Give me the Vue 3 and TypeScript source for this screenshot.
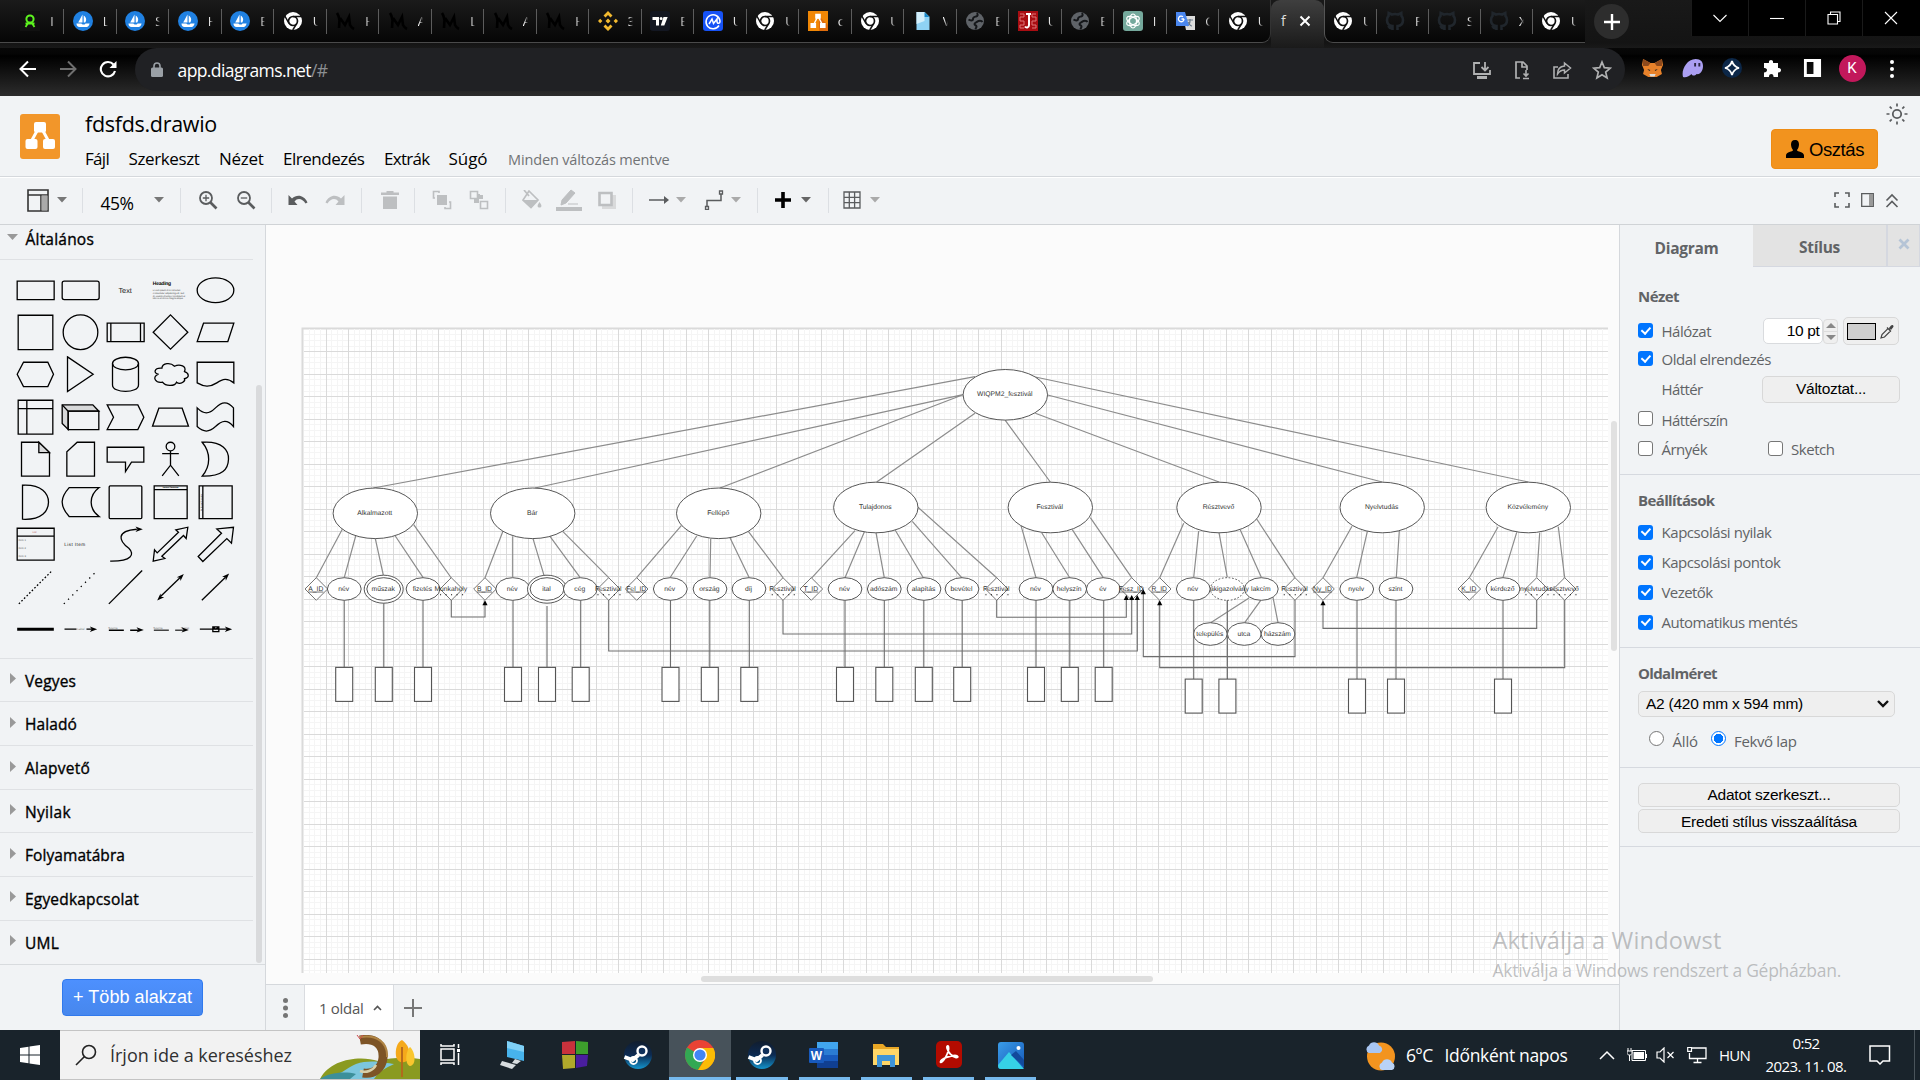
<script setup lang="ts">
interface Placed { x: number; w: number; icon: string; h?: number; gap?: number }

// Keeps a label at its designed width whichever fallback font is installed.
const vFit = {
  mounted(el: HTMLElement, binding: { value: number }) {
    const n = (el.textContent ?? '').length
    const w = el.getBoundingClientRect().width
    if (n > 0 && w > 0) el.style.letterSpacing = `${(binding.value - w) / n}px`
  },
}

// Turns icon positions along a bar into the gaps between neighbours.
function gaps(list: Placed[], start = 0): Placed[] {
  let end = start
  return list.map((it) => {
    const gap = it.x - it.w / 2 - end
    end = it.x + it.w / 2
    return { ...it, gap }
  })
}

/* ---------- browser tabs ---------- */
const fav: Record<string, string> = {
  green: '<rect width="20" height="20" fill="#111"/><circle cx="10" cy="8" r="3.6" fill="none" stroke="#5df41f" stroke-width="2"/><path d="M5.5 16l3-4.500M14.500 16l-3-4.500M5.500 12.500h9" fill="none" stroke="#5df41f" stroke-width="1.800"/>',
  sea: '<circle cx="10" cy="10" r="10" fill="#2081e2"/><path d="M9.500 3.500v8H5.200zM10.700 4.500c3 2 3 5 1.500 7h-1.500zM3.500 12.600h4.800l1.300.8h2l1-1h4c-.5 3-2.500 3.700-4 3.700H6.500c-2 0-3-1.500-3-3.500z" fill="#fff"/>',
  chrome: '<circle cx="10" cy="10" r="9" fill="#fff"/><circle cx="10" cy="10" r="4.500" fill="#fff" stroke="#111" stroke-width="1.700"/><path d="M10 5.500h8.500M6 12.300L1.800 5M13.900 12.300L9.700 19" stroke="#111" stroke-width="1.500"/>',
  m: '<path d="M2 2c2 3 2 5 2.500 7L4 17M5 7l5 7 4-8 1 8c1 2 2 3 4 4" fill="none" stroke="#000" stroke-width="2.600"/>',
  binance: '<path d="M10 0l4.500 4.500-2 2L10 4 7.500 6.500l-2-2zM0 10l2.200-2.200L4.400 10l-2.200 2.200zM15.600 10l2.200-2.200L20 10l-2.200 2.200zM10 7.500l2.500 2.500-2.500 2.500L7.500 10zM5.500 15.500l2-2L10 16l2.500-2.500 2 2L10 20z" fill="#f3ba2f"/>',
  tv: '<rect width="20" height="20" rx="3" fill="#131722"/><path d="M2.500 6H9v8.500H6V9H2.500zM13.500 6h4.200l-3.400 8.500h-3.500zM9.600 7.500a1.500 1.500 0 1 0 3 0 1.500 1.500 0 1 0-3 0" fill="#fff"/>',
  cmc: '<rect width="20" height="20" rx="3" fill="#1652f6"/><path d="M16 14.500A7 7 0 1 1 17 10c0 3-3 3-3 .5V8l-3.500 4.500L9 8l-3 5" fill="none" stroke="#fff" stroke-width="1.500"/>',
  drawio: '<rect width="20" height="20" fill="#f08705"/><path d="M11 5l9 9v6h-9z" fill="#df6c0c"/><path d="M9.500 6L5.500 14M10.500 6l4 8" stroke="#fff" stroke-width="1.500"/><path d="M7.200 2.800h5.600v5H7.200zM2.500 12h5.600v5H2.500zM12 12h5.600v5H12z" fill="#fff"/>',
  doc: '<path d="M3.500 1h8l5 5v13h-13z" fill="#8fd2f4"/><path d="M3.500 1h8l5 5h-5v4l-8 3z" fill="#d3effb"/><path d="M11.500 1l5 5h-5z" fill="#1787c9"/>',
  globe: '<circle cx="10" cy="10" r="9" fill="#5f6368"/><path d="M12 2c1 2 1 3-1 3.500S8 6 8 8 5 9.500 3.500 8.500M17.500 11c-1-2-4-1.500-5-.5s-3 1-3 2.500 2 1 2 2.500-1 1.500-1 3" stroke="#15171a" stroke-width="2" fill="none"/>',
  red: '<rect width="20" height="20" fill="#a90d12"/><path d="M2 3h4v3H2v4h4v4H2v3h4M18 3h-4v3h4v4h-4v4h4v3h-4" stroke="#d77" stroke-width="1" fill="none"/><path d="M8 3h5M11 3v11c0 3-3 3-4 1.500" stroke="#fff" stroke-width="2" fill="none"/>',
  gpt: '<rect width="20" height="20" rx="3" fill="#75a99c"/><g fill="none" stroke="#fff" stroke-width="1.200"><ellipse cx="10" cy="10" rx="3.500" ry="7"/><ellipse cx="10" cy="10" rx="3.500" ry="7" transform="rotate(60 10 10)"/><ellipse cx="10" cy="10" rx="3.500" ry="7" transform="rotate(120 10 10)"/></g>',
  translate: '<path d="M8 5h12v14h-9z" fill="#dcdcdc"/><path d="M12 9h6M15 8v2c0 2-1 4-3 5M13 11c1 2 3 4 4 4" stroke="#6a7a8a" stroke-width="1.200" fill="none"/><path d="M1 1h9l4 14H1z" fill="#4a86ee"/><path d="M9 8H6.500M9 8a2.800 2.800 0 1 1-1-2.200" stroke="#fff" stroke-width="1.300" fill="none"/>',
  git: '<path d="M7.500 19v-4c-4 0-5.500-3-5.500-6 0-1.500.5-3 1.500-4l.2-3L7 3.500c2-.6 4-.6 6 0L16.300 2l.2 3c1 1 1.500 2.500 1.500 4 0 3-1.500 6-5.500 6v4M7 17c-2 .5-3-.5-3.700-2" fill="none" stroke="#20262c" stroke-width="2.600"/>',
}
const tabsLeft = [
  ['green', 'I'], ['sea', 'L'], ['sea', 'S'], ['sea', 'H'], ['sea', 'E'], ['chrome', 'U'], ['m', 'H'], ['m', 'A'], ['m', 'L'], ['m', 'A'],
  ['m', 'H'], ['binance', '3'], ['tv', 'E'], ['cmc', 'U'], ['chrome', 'U'], ['drawio', 'c'], ['chrome', 'U'], ['doc', 'V'], ['globe', 'E'],
  ['red', 'U'], ['globe', 'E'], ['gpt', 'I'], ['translate', 'G'], ['chrome', 'U'],
]
const tabsRight = [['chrome', 'U'], ['git', 'F'], ['git', 'S'], ['git', 'X'], ['chrome', 'U']]

const G = '#b0b1b2'
const omni = gaps([
  { x: 1482, w: 20, icon: `<path d="M8 3H2v11h16v-4M13 2v8M9.500 7l3.500 3.500L16.500 7" fill="none" stroke="${G}" stroke-width="1.800"/><path d="M5 16h10v3H5z" fill="${G}"/>` },
  { x: 1522, w: 20, icon: `<path d="M8 18H4V2h7l4 4v4M10 2v5h5" fill="none" stroke="${G}" stroke-width="1.700"/><path d="M14 10v6M11.500 13.500L14 16l2.500-2.500M11 18.500h6" fill="none" stroke="${G}" stroke-width="1.600"/>` },
  { x: 1562, w: 20, icon: `<path d="M6 7H2v11h14v-4" fill="none" stroke="${G}" stroke-width="1.600"/><path d="M12.500 3l6 5-6 5v-3c-3 0-5 1-7 4 0-4 2-7.500 7-8z" fill="none" stroke="${G}" stroke-width="1.500"/>` },
  { x: 1602, w: 20, icon: `<path d="M10 2l2.300 5.600 6 .5-4.600 4 1.400 5.900L10 14.800 4.900 18l1.400-5.900-4.600-4 6-.5z" fill="none" stroke="${G}" stroke-width="1.700"/>` },
], 1472)
const exts = gaps([
  { x: 1652.5, w: 21, icon: '<path d="M1 1l7 4h4l7-4 1 6-2 5 1 4-5 3H6l-5-3 1-4-2-5z" fill="#e8822a"/><path d="M1 1l7 4-2 3-5 0zM19 1l-7 4 2 3 5 0z" fill="#8d4a1d"/><path d="M7 16h6l-1 2.500H8z" fill="#ddd"/><path d="M5 11l3 1-1 1zM15 11l-3 1 1 1z" fill="#222"/>' },
  { x: 1692.5, w: 21, icon: '<path d="M1 19c-2-6 3-18 12-18 5 0 7 3 7 7 0 5-3 9-6 8-2 2-4 2-5 0-2 2-5 4-8 3z" fill="#ab9ff2"/><path d="M12.500 5v3.500M16.500 5v3.500" stroke="#2b2540" stroke-width="1.800"/>' },
  { x: 1732.5, w: 20, icon: '<circle cx="10" cy="10" r="10" fill="#0c2748"/><path d="M10 3c1 4 3 6 7 7-4 1-6 3-7 7-1-4-3-6-7-7 4-1 6-3 7-7z" fill="#0c2748" stroke="#fff" stroke-width="1.800"/>' },
  { x: 1772.5, w: 20, icon: '<path d="M2 5h5c-1-4 5-4 4 0h5v5c4-1 4 5 0 4.500V19h-4.500c.5-4-5-4-4.500 0H2v-4.500c4 0 4-5 0-4.500z" fill="#fff"/>' },
  { x: 1812.5, w: 19, icon: '<path d="M1 1h18v18H1zM4 4v12h7V4z" fill="#fff" fill-rule="evenodd"/>' },
], 1625)

/* ---------- editor toolbar ---------- */
const D = '#5a5c5e'
const L = '#bdbfc1'
const sep = (x: number) => ({ x, w: 1, h: 25, icon: '<path d="M.5 0v25" stroke="#dcdfe3"/>' })
const car = (x: number, c = '#777') => ({ x, w: 10, h: 6, icon: `<path d="M0 0h10L5 5.500z" fill="${c}"/>` })
const tools1 = gaps([
  { x: 38, w: 22, h: 23, icon: '<path d="M1 1h20v21H1zM1 6h20M14 6v16" fill="none" stroke="#333" stroke-width="1.600"/><path d="M14.500 6.500h6v15h-6z" fill="#aaa"/>' },
  car(61.5), sep(82.5),
])
const tools2 = gaps([
  car(159.5), sep(181),
  { x: 208.5, w: 20, icon: `<circle cx="8" cy="8" r="6" fill="none" stroke="${D}" stroke-width="1.800"/><path d="M8 4.800v6.400M4.800 8h6.400" stroke="${D}" stroke-width="1.300"/><path d="M12.500 12.500l6 6" stroke="${D}" stroke-width="2.600"/>` },
  { x: 246, w: 20, icon: `<circle cx="8" cy="8" r="6" fill="none" stroke="${D}" stroke-width="1.800"/><path d="M4.800 8h6.400" stroke="${D}" stroke-width="1.300"/><path d="M12.500 12.500l6 6" stroke="${D}" stroke-width="2.600"/>` },
  sep(271.5),
  { x: 298, w: 20, icon: `<path d="M.5 5v10h9L6.500 11.500c3-4 8-3 11 2l2-1C16 5 9 4 4 8.500z" fill="${D}"/>` },
  { x: 335.5, w: 20, icon: `<path d="M19.500 5v10h-9l3-3.500c-3-4-8-3-11 2l-2-1C4 5 11 4 16 8.500z" fill="${L}"/>` },
  sep(361.5),
  { x: 390, w: 20, icon: `<path d="M1 2.500h5.500V1h7v1.500H19V5H1zM3 6.500h14V19H3z" fill="${L}"/>` },
  sep(414.5),
  { x: 442, w: 20, icon: `<path d="M5 5h10v10H5z" fill="${L}"/><path d="M7 3V1.500H1.500V8H3M13 17v1.500h5.500V12H17" fill="none" stroke="${L}" stroke-width="1.600"/>` },
  { x: 479, w: 20, icon: `<path d="M11 4v4H8v4H5V8h3V4zM5 8h5v5H5zM10 5h4v4h-4z" fill="${L}"/><path d="M1.500 1.500h7v7h-7zM11.500 11.500h7v7h-7z" fill="none" stroke="${L}" stroke-width="1.600"/>` },
  sep(505.5),
  { x: 532, w: 22, icon: `<path d="M8 1l9 9-7 7.500L2 10zM3 0l5 6" fill="none" stroke="${L}" stroke-width="1.700"/><path d="M2 10h15l-7 7.500z" fill="${L}"/><path d="M18.500 12c3 4 2 5.500 0 5.500s-3-1.500 0-5.500" fill="${L}"/>` },
  { x: 569, w: 26, h: 24, icon: `<path d="M6 12L15 2l4 3-9 10-5 2zM12 16h10" fill="${L}" stroke="${L}"/><path d="M0 19h26v4H0z" fill="${L}"/>` },
  { x: 607, w: 20, icon: `<path d="M5 5h14v14H5z" fill="#d9dadb"/><path d="M2.500 3h12v12h-12z" fill="#f1f3f5" stroke="${L}" stroke-width="2.600"/>` },
  sep(632.5),
  { x: 659, w: 20, icon: `<path d="M0 10h16" stroke="${D}" stroke-width="1.500"/><path d="M15 6l5 4-5 4z" fill="${D}"/>` },
  car(681.5, '#aaa'),
  { x: 714, w: 20, icon: `<path d="M3 16V10.500h14V4" fill="none" stroke="${D}" stroke-width="1.500"/><path d="M1.500 16.500h3v3h-3zM15.500 1h3v3h-3z" fill="none" stroke="${D}" stroke-width="1.300"/>` },
  car(736, '#aaa'), sep(757.5),
  { x: 783, w: 16, icon: '<path d="M8 2v16M0 10h16" stroke="#000" stroke-width="3.600"/>' },
  car(806, '#666'), sep(828.5),
  { x: 852, w: 18, icon: `<path d="M1 2h16v16H1zM1 7.300h16M1 12.600h16M6.300 2v16M11.600 2v16" fill="none" stroke="${D}" stroke-width="1.300"/>` },
  car(875, '#aaa'),
], 134)
const tools3 = gaps([
  { x: 1841.5, w: 16, h: 16, icon: `<path d="M1 5V1h4M11 1h4v4M15 11v4h-4M5 15H1v-4" fill="none" stroke="${D}" stroke-width="1.600"/>` },
  { x: 1867, w: 13, h: 14, icon: `<path d="M.7.7h11.600v12.600H.7z" fill="none" stroke="${D}" stroke-width="1.300"/><path d="M8 1h4v12H8z" fill="#999"/>` },
  { x: 1892, w: 14, h: 15, icon: `<path d="M1.500 7.500L7 2l5.500 5.500M1.500 14L7 8.500 12.500 14" fill="none" stroke="${D}" stroke-width="1.600"/>` },
], 1833)

/* ---------- shape palette ---------- */
const arr = '<path d="M0 0l-22-8 6 8-6 8z" fill="#000" stroke="none" '
const f = 'font-family="Liberation Sans" stroke="none" text-rendering="geometricPrecision"'
const shapes: string[] = [
  '<path d="M-55-27H56V28H-55z"/>',
  '<rect x="-55" y="-27" width="111" height="55" rx="6"/>',
  `<text x="-1" y="8" font-size="22" text-anchor="middle" fill="#222" ${f}>Text</text>`,
  `<g ${f} fill="#000"><text x="-53" y="-16" font-size="15" font-weight="bold" textLength="55">Heading</text><g font-size="7" fill="#444"><text x="-53" y="2" textLength="84">Lorem ipsum dolor sit amet,</text><text x="-53" y="11" textLength="94">consectetur adipisicing elit, sed</text><text x="-53" y="19" textLength="97">do eiusmod tempor incididunt ut</text><text x="-53" y="27" textLength="92">labore et dolore magna aliqua.</text></g></g>`,
  '<ellipse rx="55" ry="37"/>',
  '<path d="M-52-51H52V52H-52z"/>',
  '<circle r="52"/>',
  '<path d="M-55-27H56V28H-55zM-44-27V28M45-27V28"/>',
  '<path d="M0-52L52 0 0 51-52 0z"/>',
  '<path d="M-36-27H55L37 28H-55z"/>',
  '<path d="M-55 0L-36-36H37L54 0 37 37H-36z"/>',
  '<path d="M-39-52L38 0-39 52z"/>',
  '<path d="M-39-32V32C-39 58 39 58 39 32V-32"/><ellipse cx="0" cy="-32" rx="39" ry="19"/>',
  '<path d="M-26-18C-50-20-52-2-36 0-58 8-44 28-24 24-14 38 14 36 18 24 30 34 46 20 42 13 58 10 56-4 42-8 50-24 28-32 12-24 0-36-24-34-26-18z"/>',
  '<path d="M-55-36H55V26C35 10 22 14 4 26-18 40-34 38-55 26z"/>',
  '<path d="M-52-51H52V51H-52zM-26-51V51M-52-26H52"/>',
  '<path d="M-55-37H37L55-18H-37V37L-55 19z" fill="#d8d9da"/><path d="M-55-37L-37-18M-37-18H55V37H-37z"/>',
  '<path d="M-55-37H37L55 0 37 37H-55L-36 0z"/>',
  '<path d="M-35-27H35L54 27H-54z"/>',
  '<path d="M-55-28C-35-8-20-8 0-28 20-48 36-48 54-28V28C36 6 20 8 0 28-20 46-35 46-55 28z"/>',
  '<path d="M-42-51H10L42-20V51H-42z"/><path d="M10-51V-20H42z" fill="#d8d9da"/>',
  '<path d="M-10-51H42V51H-41V-22z"/>',
  '<path d="M-55-36H55V9H18L0 37V9H-55z"/>',
  '<circle cy="-38" r="13"/><path d="M0-25V18M-25-17H25M-25 50L0 18 25 50"/>',
  '<path d="M-40-51C22-56 40-25 39 0 38 30 22 52-40 51-14 20-14-20-40-51z"/>',
  '<path d="M-39-51V51C20 54 39 25 39 0 39-25 20-54-39-51z"/>',
  '<path d="M-34-44H56C24-20 24 20 56 43H-34C-64 10-60-15-34-44z"/>',
  '<rect x="-49" y="-49" width="98" height="98" rx="3"/>',
  `<path d="M-49-49H50V49H-49zM-49-38H50"/><text x="0" y="-42" font-size="6" font-weight="bold" text-anchor="middle" textLength="48" fill="#000" ${f}>Vertical Container</text>`,
  `<path d="M-49-49H50V49H-49zM-38-49V49"/><text transform="translate(-42 0) rotate(-90)" font-size="6" text-anchor="middle" fill="#000" ${f}>Horizontal Container</text>`,
  `<path d="M-55-48H56V48H-55zM-55-24H56"/><g ${f} font-size="8" fill="#555"><text x="-3" y="-33" text-anchor="middle" fill="#b66">List</text><text x="-51" y="-10">Item 1</text><text x="-51" y="14">Item 2</text><text x="-51" y="37">Item 3</text></g>`,
  `<text x="-49" y="4" font-size="14" textLength="63" fill="#222" ${f}>List Item</text>`,
  `<path d="M-46 51C20 52 28 30 10 12-20-10-30-40 34-45"/>${arr} transform="translate(52 -45)"/>`,
  '<path d="M-52 51L-48 17-40 26 24-36 16-43 52-51 47-17 39-26-26 36-17 43z"/>',
  '<path d="M-52 37L18-33 4-46 54-51 48-3 34-17-38 52z"/>',
  '<path d="M-50 50L48-48" stroke-dasharray="5 6"/>',
  '<path d="M-50 50L48-48" stroke-dasharray="4 14"/>',
  '<path d="M-50 50L50-50"/>',
  `<path d="M-30 28L30-30"/>${arr} transform="translate(40 -40) rotate(-45)"/>${arr} transform="translate(-40 40) rotate(135)"/>`,
  `<path d="M-41 39L30-30"/>${arr} transform="translate(41 -41) rotate(-45)"/>`,
  '<path d="M-55 0H55" stroke-width="9"/>',
  `<path d="M-48 0H-12M18 0H38"/><text x="-10" y="3" font-size="9" fill="#777" ${f}>Label</text>${arr} transform="translate(50 0)"/>`,
  `<path d="M-50 3H-5M14 3H40" stroke-width="5"/><text x="-52" y="-1" font-size="9" fill="#777" ${f}>Source</text>${arr} transform="translate(55 2)"/>`,
  `<path d="M-50 3H-5M14 3H38" stroke-width="5" stroke="#444"/><text x="-52" y="-1" font-size="9" fill="#777" ${f}>Source</text><text x="31" y="-1" font-size="9" fill="#777" ${f}>Target</text>${arr} transform="translate(55 2)"/>`,
  `<path d="M-47 0H40M-8-7H10V7H-8zM-8-7L1 0 10-7"/>${arr} transform="translate(50 0)"/>`,
]
const sections = ['Vegyes', 'Haladó', 'Alapvető', 'Nyilak', 'Folyamatábra', 'Egyedkapcsolat', 'UML']
const sectionW = [51, 52, 65, 46, 100, 114, 34]

/* ---------- diagram ---------- */
const vLines = Array.from({ length: 232 }, (_, i) => 303.5 + i * 5.625)
const hLines = Array.from({ length: 115 }, (_, i) => 329.2 + i * 5.625)

const entities: [number, number, string][] = [
  [1005.3, 394.8, 'WIQPM2_fesztivál'], [375.3, 513.3, 'Alkalmazott'], [532.7, 513.3, 'Bár'], [718.7, 513.3, 'Fellépő'],
  [875.8, 507.5, 'Tulajdonos'], [1050.3, 507.5, 'Fesztivál'], [1219, 507.5, 'Résztvevő'], [1382.2, 507.5, 'Nyelvtudás'], [1528.3, 507.5, 'Közvélemény'],
]
// Attribute: centre x, label, kind (e ellipse, d double, w dashed ellipse, k key, f foreign key)
const attrs: [number, string, string][] = [
  [316.3, 'A_ID', 'k'], [344.3, 'név', 'e'], [383.7, 'műszak', 'd'], [423, 'fizetés', 'e'], [451.3, 'Munkahely', 'f'],
  [485, 'B_ID', 'k'], [512.7, 'név', 'e'], [547, 'ital', 'd'], [580.3, 'cég', 'e'], [608.7, 'Fesztivál', 'f'],
  [636.7, 'Fel_ID', 'k'], [670.3, 'név', 'e'], [710, 'ország', 'e'], [749, 'díj', 'e'], [783, 'Fesztivál', 'f'],
  [811.3, 'T_ID', 'k'], [845, 'név', 'e'], [884.3, 'adószám', 'e'], [924, 'alapítás', 'e'], [962, 'bevétel', 'e'], [996.7, 'Fesztivál', 'f'],
  [1036, 'név', 'e'], [1069.7, 'helyszín', 'e'], [1103.3, 'év', 'e'], [1131.7, 'Fesz_ID', 'k'],
  [1159.7, 'R_ID', 'k'], [1261.3, 'lakcím', 'e'], [1227.3, 'diákigazolvány', 'w'], [1193.3, 'név', 'e'], [1295, 'Fesztivál', 'f'],
  [1323, 'Ny_ID', 'k'], [1356.7, 'nyelv', 'e'], [1396, 'szint', 'e'],
  [1469.3, 'K_ID', 'k'], [1503, 'kérdező', 'e'], [1536.7, 'nyelvtudás', 'f'], [1564.7, 'résztvevő', 'f'],
]
const subs: [number, string][] = [[1210.3, 'település'], [1244.3, 'utca'], [1278, 'házszám']]
const boxes: [number, number][] = [
  [344.2, 667.4], [383.8, 667.4], [423, 667.4], [513, 667.4], [547, 667.4], [580.7, 667.4], [670.5, 667.4], [709.8, 667.4], [749.3, 667.4],
  [845, 667.4], [884.3, 667.4], [923.8, 667.4], [962.2, 667.4], [1036, 667.4], [1069.8, 667.4], [1103.7, 667.4],
  [1193.7, 679.1], [1227.4, 679.1], [1357, 679.1], [1396, 679.1], [1503, 679.1],
]
const seg = (ox: number, oy: number, list: number[][]) =>
  list.map(([a, b, c, d]) => `M${(ox + a / 3).toFixed(1)} ${(oy + b / 3).toFixed(1)}L${(ox + c / 3).toFixed(1)} ${(oy + d / 3).toFixed(1)}`).join('')
const links =
  'M975 376.700L373.300 488M963 394.700L535 488M963 394.700L720 488M975 413.300L876.700 482M1005.300 420.300L1050.300 482M1035.300 413.300L1219 482M1047.700 395L1382.200 482M1035.300 377L1528.300 482' +
  seg(290, 460, [
    [157, 208, 79, 353], [197, 228, 163, 352], [256, 236, 280, 345], [316, 228, 399, 352], [371, 194, 484, 354],
    [639, 213, 585, 353], [668, 229, 668, 352], [729, 236, 762, 346], [780, 229, 870, 352], [818, 214, 956, 353],
    [1174, 197, 1040, 353], [1220, 228, 1141, 352], [1262, 236, 1260, 352], [1320, 233, 1377, 352], [1375, 214, 1479, 353],
  ]) +
  seg(780, 360, [
    [225, 512, 94, 655], [253, 516, 195, 653], [288, 518, 313, 653], [346, 511, 430, 653], [397, 484, 545, 653], [414, 442, 650, 653],
    [723, 497, 768, 653], [785, 518, 869, 653], [877, 509, 970, 653], [931, 473, 1055, 653],
  ]) +
  seg(1120, 460, [
    [191, 190, 119, 353], [236, 213, 221, 352], [297, 218, 322, 352], [361, 210, 424, 352], [410, 177, 525, 353],
    [387, 414, 272, 488], [422, 421, 374, 488], [459, 412, 474, 488],
    [696, 199, 609, 353], [742, 215, 710, 352], [838, 213, 829, 352],
    [1134, 201, 1048, 353], [1190, 217, 1149, 352], [1259, 218, 1250, 352], [1315, 200, 1334, 353],
  ])
const drops = boxes.map(([x, y]) => `M${x} ${x === 383.8 ? 603 : x === 547 ? 606 : 600}V${y}`).join('')
const routes =
  'M451.300 600V617H485V602M608.700 600V651H1137.300V596M783 600V634H1131.700V596M996.700 600V617.300H1126.300V596M1295 600V656.600H1143.300V592M1564.700 600V667.600H1159.700V602M1536.700 600V628.400H1323V602'
const heads: [number, number][] = [[485, 600.3], [1137.3, 595], [1131.7, 595], [1126.3, 595], [1143.3, 589.3], [1159.7, 600.3], [1323, 600.3]]

/* ---------- taskbar ---------- */
const steam = '<defs><linearGradient id="st" x2="0" y2="1"><stop stop-color="#111d2e"/><stop offset=".5" stop-color="#0c2a52"/><stop offset="1" stop-color="#1494cc"/></linearGradient></defs><circle cx="15" cy="15" r="14" fill="url(#st)"/><path d="M1.500 17l8 3 6-5" stroke="#fff" stroke-width="4" fill="none"/><circle cx="19" cy="11" r="4.500" fill="#10305a" stroke="#fff" stroke-width="2.400"/><circle cx="10.500" cy="20.500" r="3.500" fill="none" stroke="#fff" stroke-width="1.800"/>'
const apps = [
  { n: 'taskview', icon: '<path d="M5 9h13v11H5zM5 4v2h13V4M5 25v-2h13v2M22.500 4v4M22.500 13v12" fill="none" stroke="#fff" stroke-width="1.500"/><path d="M21 9h3v3h-3z" fill="#fff"/>' },
  { n: 'pc', icon: '<path d="M9 1l17 5v15L9 17z" fill="#47b3ec"/><path d="M9 1l17 5v6L9 8z" fill="#7fd0f6"/><path d="M17 19l6 2-4 3-5-1zM4 21l14 4-4 4-12-4z" fill="#d8dde0"/>' },
  { n: 'squares', icon: '<path d="M2 2l13-1v13H2z" fill="#c8323c"/><path d="M16 1l12 1v12H16z" fill="#3d9e2c"/><path d="M2 15h13v13L3 29z" fill="#b0a92b"/><path d="M16 15h12l-1 11-11 2z" fill="#4a1e9e"/>' },
  { n: 'steam', icon: steam },
  { n: 'chrome', on: true, run: true, icon: '<circle cx="15" cy="15" r="15" fill="#e94335"/><path d="M15 15L2 7.500A15 15 0 0 0 13 29.900L20 18z" fill="#33a853"/><path d="M15 8h13.300A15 15 0 0 1 13 29.900L21 18z" fill="#fbbc05"/><circle cx="15" cy="15" r="7" fill="#fff"/><circle cx="15" cy="15" r="5.600" fill="#4285f4"/>' },
  { n: 'steam2', run: true, icon: steam },
  { n: 'word', run: true, icon: '<path d="M8 2h21v7H8z" fill="#41a5ee"/><path d="M8 9h21v6H8z" fill="#2b7cd3"/><path d="M8 15h21v6H8z" fill="#185abd"/><path d="M8 21h21v7H8z" fill="#103f91"/><rect x="0" y="8" width="15" height="15" rx="1" fill="#185abd"/><text x="7.500" y="19.500" font-size="12" font-weight="bold" font-family="Liberation Sans" text-anchor="middle" fill="#fff">W</text>' },
  { n: 'files', run: true, icon: '<path d="M2 4h10l3 3h13v6H2z" fill="#e9a725"/><path d="M2 9h26v16H2z" fill="#ffd667"/><path d="M6 15h18v12h-5v-6h-8v6H6z" fill="#3f94d8"/>' },
  { n: 'acrobat', run: true, icon: '<rect x="2" y="1" width="26" height="27" rx="5" fill="#b30b00"/><path d="M6.500 22c2 2 9-10 8-15-.5-2-2-1-1.500 1 1 4 5 9 9 9.500 3 .3 2-2-1-2-4 0-14 3-14.500 6.500z" fill="none" stroke="#fff" stroke-width="1.800"/>' },
  { n: 'photos', run: true, icon: '<defs><linearGradient id="ph" x1="0" y1="0" x2="1" y2="1"><stop stop-color="#3a9ce8"/><stop offset="1" stop-color="#1558b8"/></linearGradient></defs><rect x="2" y="2" width="26" height="27" rx="3" fill="url(#ph)"/><path d="M2 25L13 12l15 17H5c-2 0-3-1-3-4z" fill="#36d0e6"/><path d="M15 15l5-4 8 9v7z" fill="#124a9c"/><circle cx="22.500" cy="8" r="2" fill="#fff"/>' },
]
const menu: [string, number, number][] = [['Fájl', 24, 19.5], ['Szerkeszt', 71, 19.5], ['Nézet', 44.5, 19.5], ['Elrendezés', 81.5, 19.5], ['Extrák', 45.5, 19], ['Súgó', 39, 20.5]]
const options: [string, number][] = [['Kapcsolási nyilak', 110], ['Kapcsolási pontok', 119], ['Vezetők', 51], ['Automatikus mentés', 136]]
</script>

<template>
  <div class="screen">
    <header class="chrome">
      <div class="strip">
        <div class="tabs left">
          <div v-for="(t, i) in tabsLeft" :key="i" class="tab" :class="{ last: i === 23 }">
            <svg width="20" height="20" viewBox="0 0 20 20" v-html="fav[t[0]]"></svg><span class="clip">{{ t[1] }}</span>
          </div>
        </div>
        <div class="active"><span class="f">f</span><svg width="12" height="12" viewBox="0 0 12 12"><path d="M1.500 1.500l9 9M10.500 1.500l-9 9" stroke="#fff" stroke-width="2" /></svg></div>
        <div class="tabs right">
          <div v-for="(t, i) in tabsRight" :key="i" class="tab" :class="{ last: i === 4 }">
            <svg width="20" height="20" viewBox="0 0 20 20" v-html="fav[t[0]]"></svg><span class="clip">{{ t[1] }}</span>
          </div>
        </div>
        <div class="newtab"><svg width="16" height="16" viewBox="0 0 16 16"><path d="M8 0v16M0 8h16" stroke="#fff" stroke-width="2.400" /></svg></div>
        <div class="wins">
          <i><svg width="14" height="14" viewBox="0 0 14 14"><path d="M.5 4L7 10.500 13.500 4" /></svg></i>
          <i><svg width="14" height="14" viewBox="0 0 14 14"><path d="M0 7.500h14" /></svg></i>
          <i><svg width="14" height="14" viewBox="0 0 14 14"><path d="M1 3.500h9.500V13H1zM3.500 3.500V1H13v9.500h-2.500" /></svg></i>
          <i><svg width="14" height="14" viewBox="0 0 14 14"><path d="M1 1l12 12M13 1L1 13" /></svg></i>
        </div>
      </div>
      <div class="nav">
        <svg class="b1" width="18" height="18" viewBox="0 0 18 18"><path d="M17 9H2M9 1.500L1.500 9 9 16.500" fill="none" stroke="#fff" stroke-width="2" /></svg>
        <svg class="b2" width="18" height="18" viewBox="0 0 18 18"><path d="M1 9h15M9 1.500L16.500 9 9 16.500" fill="none" stroke="#6f6f6f" stroke-width="2" /></svg>
        <svg class="b3" width="18" height="18" viewBox="0 0 18 18"><path d="M16 11a7.200 7.200 0 1 1-1.500-6.500" fill="none" stroke="#fff" stroke-width="2.100" /><path d="M17.500 1v7h-7z" fill="#fff" /></svg>
        <div class="omni">
          <svg width="12" height="15" viewBox="0 0 12 15"><path d="M3 6V4a3 3 0 0 1 6 0v2" fill="none" stroke="#9aa0a6" stroke-width="1.600" /><rect y="5.500" width="12" height="9.500" rx="1.500" fill="#9aa0a6" /></svg>
          <span v-fit="150" class="url">app.diagrams.net<em>/#</em></span>
          <div class="omni-icons"><svg v-for="(o, i) in omni" :key="i" width="20" height="20" viewBox="0 0 20 20" :style="{ marginLeft: o.gap + 'px' }" v-html="o.icon"></svg></div>
        </div>
        <svg v-for="(o, i) in exts" :key="i" class="ext" :width="o.w" height="20" viewBox="0 0 20 20" preserveAspectRatio="none" :style="{ marginLeft: o.gap + 'px' }" v-html="o.icon"></svg>
        <div class="avatar">K</div>
        <svg class="dots" width="4" height="18" viewBox="0 0 4 18"><g fill="#fff"><circle cx="2" cy="2" r="2" /><circle cx="2" cy="9" r="2" /><circle cx="2" cy="16" r="2" /></g></svg>
      </div>
    </header>

    <section class="head">
      <svg class="logo" width="40" height="45" viewBox="0 0 40 45"><rect width="40" height="45" rx="3" fill="#f2962a" /><path d="M18 15l-7 13M22 15l7 13" stroke="#fff" stroke-width="3" /><rect x="14" y="8" width="12" height="10.500" rx="2" fill="#fff" /><rect x="5.500" y="25" width="12" height="10" rx="2" fill="#fff" /><rect x="23" y="25" width="12" height="10" rx="2" fill="#fff" /></svg>
      <div class="titles">
        <div class="title"><span v-fit="132">fdsfds.drawio</span></div>
        <nav class="menu">
          <span v-for="m in menu" :key="m[0]" v-fit="m[1]" :style="{ marginRight: m[2] + 'px' }">{{ m[0] }}</span>
          <span v-fit="161.500" class="status">Minden változás mentve</span>
        </nav>
      </div>
      <div class="share"><svg width="18" height="18" viewBox="0 0 18 18"><path d="M9 0c3 0 4 2 4 4.500 0 2-1 4.500-2 5.500 0 2 7 1.500 7 5.500V18H0v-2.500c0-4 7-3.500 7-5.500-1-1-2-3.500-2-5.500C5 2 6 0 9 0z" /></svg><span v-fit="55">Osztás</span></div>
      <svg class="sun" width="22" height="22" viewBox="-11 -11 22 22"><circle r="4.200" fill="none" stroke="#5a5c5e" stroke-width="1.800" /><path d="M0-10.500v3M0 10.500v-3M-10.500 0h3M10.500 0h-3M-7.300-7.300l2 2M7.300 7.300l-2-2M-7.300 7.300l2-2M7.300-7.300l-2 2" stroke="#5a5c5e" stroke-width="1.700" /></svg>
    </section>

    <section class="toolbar">
      <svg v-for="(t, i) in tools1" :key="'a' + i" :width="t.w" :height="t.h ?? 20" :style="{ marginLeft: t.gap + 'px' }" v-html="t.icon"></svg>
      <span v-fit="33" class="zoom">45%</span>
      <svg v-for="(t, i) in tools2" :key="'b' + i" :width="t.w" :height="t.h ?? 20" :style="{ marginLeft: t.gap + 'px' }" v-html="t.icon"></svg>
      <div class="tright"><svg v-for="(t, i) in tools3" :key="'c' + i" :width="t.w" :height="t.h ?? 20" :style="{ marginLeft: t.gap + 'px' }" v-html="t.icon"></svg></div>
    </section>

    <main class="work">
      <aside class="side">
        <div class="list">
          <div class="sections">
            <div class="open"><svg width="11" height="6" viewBox="0 0 11 6"><path d="M0 0h11L5.500 6z" fill="#999" /></svg><span v-fit="68.500">Általános</span></div>
            <div class="palette">
              <svg v-for="(s, i) in shapes" :key="i" viewBox="-67.500 -63.700 135 127.400" fill="none" stroke="#000" stroke-width="3.900" v-html="s"></svg>
            </div>
            <div v-for="(s, i) in sections" :key="s" class="sec"><svg width="6" height="11" viewBox="0 0 6 11"><path d="M0 0v11l6-5.500z" fill="#999" /></svg><span v-fit="sectionW[i]">{{ s }}</span></div>
          </div>
          <div class="vbar"></div>
        </div>
        <div class="more"><div class="morebtn"><span v-fit="119">+ Több alakzat</span></div></div>
      </aside>

      <div class="center">
        <svg class="canvas" width="1353" height="759" viewBox="266 225 1353 759">
          <rect x="303" y="329" width="1305" height="644" fill="#fff" />
          <path d="M302.500 973V328.500H1608" fill="none" stroke="#dadada" stroke-width="2" />
          <g shape-rendering="crispEdges">
            <template v-for="(x, i) in vLines" :key="'v' + i"><rect v-if="i % 4" :x="Math.floor(x)" y="329" width="1" height="644" fill="#f5f5f5" /></template>
            <template v-for="(y, i) in hLines" :key="'h' + i"><rect v-if="i % 4" x="304" :y="Math.floor(y)" width="1304" height="1" fill="#f5f5f5" /></template>
            <template v-for="(x, i) in vLines" :key="'V' + i"><rect v-if="i % 4 === 0 && i" :x="Math.floor(x)" y="329" width="1" height="644" fill="#dadada" /></template>
            <template v-for="(y, i) in hLines" :key="'H' + i"><rect v-if="i % 4 === 0 && i" x="304" :y="Math.floor(y)" width="1304" height="1" fill="#dadada" /></template>
          </g>
          <path :d="links" stroke="#8c8c8c" stroke-width="1.200" fill="none" />
          <g fill="#fff" stroke="#444" stroke-width=".9">
            <ellipse v-for="e in entities" :key="e[2]" :cx="e[0]" :cy="e[1]" rx="42.200" ry="25.300" />
            <ellipse v-for="s in subs" :key="s[1]" :cx="s[0]" cy="634" rx="16.900" ry="11.300" />
          </g>
          <g v-for="(a, i) in attrs" :key="'a' + i">
            <path v-if="a[2] === 'k' || a[2] === 'f'" :d="`M${a[0]} 577.700l11.300 11.300-11.300 11.300-11.300-11.300z`" fill="#fff" stroke="#666" stroke-width=".9" />
            <template v-else>
              <ellipse v-if="a[2] === 'd'" :cx="a[0]" cy="589.200" rx="19.500" ry="14" fill="#fff" stroke="#444" stroke-width=".9" />
              <ellipse :cx="a[0]" cy="589" rx="16.900" ry="11.300" fill="#fff" stroke="#444" stroke-width=".9" :stroke-dasharray="a[2] === 'w' ? '1.700 1.700' : undefined" />
            </template>
            <text :x="a[0] - 0.5" y="590.700" class="dt" :class="{ u: a[2] === 'k' }">{{ a[1] }}</text>
            <path v-if="a[2] === 'f'" :d="`M${a[0] - 11.300} 594.800h27`" stroke="#111" stroke-width="1.100" stroke-dasharray="1.100 4.400" />
          </g>
          <text v-for="e in entities" :key="'t' + e[2]" :x="e[0] - 0.5" :y="e[1] + 1.5" class="dt">{{ e[2] }}</text>
          <text v-for="s in subs" :key="'t' + s[1]" :x="s[0] - 0.5" y="635.700" class="dt">{{ s[1] }}</text>
          <path :d="drops + routes" fill="none" stroke="#6e6e6e" stroke-width="1.100" />
          <path v-for="(h, i) in heads" :key="'p' + i" :d="`M${h[0]} ${h[1]}l2.600 5h-5.200z`" fill="#000" />
          <rect v-for="(b, i) in boxes" :key="'b' + i" :x="b[0] - 8.5" :y="b[1]" width="17" height="34" fill="#fff" stroke="#555" stroke-width="1.100" />
          <rect x="1611" y="421" width="6" height="230" rx="3" fill="#e1e1e1" />
          <rect x="701" y="976" width="452" height="6" rx="3" fill="#dedede" />
        </svg>
        <div class="pages">
          <svg class="pd" width="5" height="20" viewBox="0 0 5 20"><g fill="#757575"><circle cx="2.500" cy="2.500" r="2.500" /><circle cx="2.500" cy="10" r="2.500" /><circle cx="2.500" cy="17.500" r="2.500" /></g></svg>
          <div class="page"><span v-fit="44.500">1 oldal</span><svg width="9" height="6" viewBox="0 0 9 6"><path d="M1 5l3.500-3.500L8 5" fill="none" stroke="#555" stroke-width="1.600" /></svg></div>
          <svg class="pp" width="18" height="18" viewBox="0 0 18 18"><path d="M9 0v18M0 9h18" stroke="#777" stroke-width="2" /></svg>
        </div>
      </div>

      <aside class="panel">
        <div class="ptabs">
          <div class="pt on"><span v-fit="64">Diagram</span></div>
          <div class="pt off"><span v-fit="41">Stílus</span></div>
          <div class="pt x"><svg width="12" height="12" viewBox="0 0 12 12"><path d="M1.500 1.500l9 9M10.500 1.500l-9 9" stroke="#b5c4d6" stroke-width="2.800" /></svg></div>
        </div>
        <div class="box view">
          <h4><span v-fit="41">Nézet</span></h4>
          <div class="row r28">
            <i class="ck on"></i><span v-fit="49.500" class="lb">Hálózat</span>
            <div class="num"><span v-fit="32.500">10 pt</span></div>
            <div class="spin"><b><svg width="10" height="5" viewBox="0 0 10 5"><path d="M0 5h10L5 0z" fill="#888" /></svg></b><b><svg width="10" height="5" viewBox="0 0 10 5"><path d="M0 0h10L5 5z" fill="#888" /></svg></b></div>
            <div class="color"><u></u><svg width="14" height="15" viewBox="0 0 14 15"><path d="M1 14l1-3.500 6-6 2.500 2.500-6 6zM7 3.500l4 4M9.500 5L12 2.500" fill="none" stroke="#444" stroke-width="1.200" /><path d="M9 4l2-2.500c1.500-1.500 3.500.5 2 2L11 6z" fill="#444" /></svg></div>
          </div>
          <div class="row r28"><i class="ck on"></i><span v-fit="109.500" class="lb">Oldal elrendezés</span></div>
          <div class="row r32"><i class="ck none"></i><span v-fit="41" class="lb">Háttér</span><div class="chg"><span v-fit="70">Változtat...</span></div></div>
          <div class="row r28"><i class="ck"></i><span v-fit="66" class="lb low">Háttérszín</span></div>
          <div class="row r32"><i class="ck"></i><span v-fit="45.500" class="lb">Árnyék</span><i class="ck second"></i><span v-fit="43.500" class="lb">Sketch</span></div>
        </div>
        <div class="box opts">
          <h4><span v-fit="76.500">Beállítások</span></h4>
          <div v-for="o in options" :key="o[0]" class="row r30"><i class="ck on"></i><span v-fit="o[1]" class="lb">{{ o[0] }}</span></div>
        </div>
        <div class="box size">
          <h4><span v-fit="79">Oldalméret</span></h4>
          <div class="select"><span v-fit="157">A2 (420 mm x 594 mm)</span><svg width="12" height="8" viewBox="0 0 12 8"><path d="M1 1l5 5 5-5" fill="none" stroke="#111" stroke-width="2.400" /></svg></div>
          <div class="radios"><i class="rd"></i><span v-fit="25.500">Álló</span><i class="rd on"></i><span v-fit="62.500">Fekvő lap</span></div>
        </div>
        <div class="box btns">
          <div class="btn"><span v-fit="123">Adatot szerkeszt...</span></div>
          <div class="btn"><span v-fit="176">Eredeti stílus visszaálítása</span></div>
        </div>
      </aside>
    </main>

    <footer class="task">
      <div class="start"><svg width="20" height="20" viewBox="0 0 20 20"><path d="M0 3l8.500-1.200v7.700H0zM9.500 1.600L20 0v9.500H9.500zM0 10.500h8.500v7.700L0 17zM9.500 10.500H20V20L9.500 18.400z" fill="#fff" /></svg></div>
      <div class="search">
        <svg width="22" height="22" viewBox="0 0 22 22"><circle cx="14" cy="8" r="6.500" fill="none" stroke="#222" stroke-width="1.600" /><path d="M9.500 12.500l-8.500 8.500" stroke="#222" stroke-width="1.600" /></svg>
        <span v-fit="182">Írjon ide a kereséshez</span>
        <svg class="art" width="100" height="44" viewBox="0 0 100 44">
          <path d="M0 44C10 24 40 20 58 26c14-4 30-4 42-2v20z" fill="#8a9a20" /><path d="M4 44c18-4 20-10 32-15 14-5 30-1 38 0-8 4-14 6-20 15z" fill="#7cc6dd" /><path d="M0 44c8-6 24-8 36-5l-6 5z" fill="#3c8f9a" />
          <path d="M40 5c16-3 24 6 23 18-1 10-9 17-20 15" fill="none" stroke="#7d5426" stroke-width="9" /><path d="M40 2c17-3 28 6 27 20" fill="none" stroke="#b08545" stroke-width="2" /><path d="M56 30c-3 6-10 8-16 6" fill="none" stroke="#d8d0a8" stroke-width="2.500" />
          <path d="M82 5c6 4 9 12 7 18-3 7-12 5-13-2-1-6 1-14 6-16z" fill="#f5a91a" /><path d="M90 12c5 4 7 18 0 19-5-1-5-14 0-19z" fill="#f9c62e" /><path d="M82 12v30" stroke="#b5651c" stroke-width="1.800" /><path d="M37 0l3 4 3-4" stroke="#d04a50" fill="none" />
        </svg>
      </div>
      <div class="apps">
        <div v-for="a in apps" :key="a.n" class="app" :class="{ on: a.on, run: a.run }"><svg width="30" height="30" viewBox="0 0 30 30" v-html="a.icon"></svg></div>
      </div>
      <div class="tray">
        <svg class="wx" width="31" height="33" viewBox="0 0 31 33"><circle cx="16" cy="17.500" r="14" fill="#f3941f" /><path d="M4 14a4 4 0 0 1 0-7.500 5.500 5.500 0 0 1 10 0A4 4 0 0 1 15 14z" fill="#a9c6f2" /><path d="M17 31a4 4 0 0 1 0-7.500 5.500 5.500 0 0 1 10 0 4 4 0 0 1 0 7.500z" fill="#b9d2f6" /></svg>
        <span v-fit="26.500" class="deg">6°C</span><span v-fit="123" class="wt">Időnként napos</span>
        <svg class="t1" width="16" height="10" viewBox="0 0 16 10"><path d="M1 9l7-7 7 7" fill="none" stroke="#fff" stroke-width="1.500" /></svg>
        <svg class="t2" width="20" height="16" viewBox="0 0 20 16"><path d="M5 3.500h13.500v10H5z" fill="#19232b" stroke="#fff" /><path d="M6.500 5h10.500v7H6.500z" fill="#fff" /><path d="M19.500 7v4" stroke="#fff" stroke-width="1.500" /><path d="M1 1v3M4 1v3M0 4h5v2c0 1-1 2-2.500 2S0 7 0 6zM2.500 8v6" stroke="#fff" fill="#19232b" /></svg>
        <svg class="t3" width="19" height="16" viewBox="0 0 19 16"><path d="M1 5h3l4-4v14l-4-4H1z" fill="none" stroke="#fff" stroke-width="1.200" /><path d="M11.500 5l6 6M17.500 5l-6 6" stroke="#fff" stroke-width="1.200" /></svg>
        <svg class="t4" width="20" height="18" viewBox="0 0 20 18"><path d="M5 2h14v10.500H2.500V7M6.500 16.500h8M10.500 12.500v4" fill="none" stroke="#fff" stroke-width="1.300" /><path d="M.7 1.500h3.800v3.800H.7z" fill="none" stroke="#fff" stroke-width="1.200" /></svg>
        <span v-fit="31" class="hun">HUN</span>
        <div class="clock"><span v-fit="27">0:52</span><span v-fit="81">2023. 11. 08.</span></div>
        <svg class="note" width="22" height="20" viewBox="0 0 22 20"><path d="M1 1h19.500v15H14l-3 3-3-3H1z" fill="none" stroke="#fff" stroke-width="1.500" /></svg>
        <i class="edge"></i>
      </div>
    </footer>

    <div class="mark"><div class="m1"><span v-fit="229">Aktiválja a Windowst</span></div><div class="m2"><span v-fit="348.500">Aktiválja a Windows rendszert a Gépházban.</span></div></div>
  </div>
</template>

<style>
body { margin: 0; overflow: hidden; }
</style>

<style scoped>
* { box-sizing: border-box; }
.screen { width: 1920px; height: 1080px; position: relative; overflow: hidden; display: flex; flex-direction: column; background: #f1f3f5; font-family: "Open Sans", "Noto Sans", sans-serif; color: #000; }
span { white-space: nowrap; flex: none; }
svg { flex: none; display: block; }
i, em { font-style: normal; }

.chrome { height: 96px; background: linear-gradient(#191919, #050505 54px, #000 56px, #2b2b2b 95px); display: flex; flex-direction: column; }
.strip { height: 48px; display: flex; background: linear-gradient(#191919, #141414 43px, #191919); }
.tabs { height: 43px; display: flex; flex: none; background: linear-gradient(#1b1b1b, #060606 41px); border-bottom: 1px solid #4a4a4a; }
.tabs.left { width: 1271px; padding-left: 11.500px; border-right: 1px solid #333; border-radius: 0 0 9px 0; }
.tabs.right { width: 261px; padding-left: 0; border-left: 1px solid #555; border-radius: 0 0 0 9px; }
.tab { width: 52.500px; height: 42px; flex: none; padding: 0 0 0 8.700px; display: flex; align-items: center; position: relative; }
.tabs.right .tab { width: 52px; padding-left: 8px; }
.tab:after { content: ""; position: absolute; right: 0; top: 9px; height: 25px; width: 1px; background: #5c5c5c; }
.tab.last { width: 40px; }
.tabs.right .tab.last { width: 40px; }
.tab.last:after { display: none; }
.clip { margin-left: 10px; color: #fff; font-size: 13px; line-height: 20px; -webkit-mask-image: linear-gradient(90deg, #000 1px, transparent 5px); mask-image: linear-gradient(90deg, #000 1px, transparent 5px); }
.active { width: 53px; height: 48px; flex: none; background: linear-gradient(#3f3f3f, #1a1a1a); border-radius: 9px 9px 0 0; display: flex; align-items: center; padding: 0 0 6px 10px; }
.f { color: #ddd; font-size: 14px; line-height: 20px; width: 5px; margin-right: 13px; }
.newtab { width: 35px; height: 35px; margin: 4px 0 0 9px; border-radius: 50%; background: #2d2d2d; display: flex; align-items: center; justify-content: center; }
.wins { margin-left: auto; display: flex; height: 36px; width: 229px; background: #000; }
.wins i { width: 57px; border-left: 1px solid #1a1a1a; display: flex; align-items: center; justify-content: center; }
.wins path { fill: none; stroke: #fff; stroke-width: 1.100; }
.nav { height: 48px; display: flex; align-items: center; padding: 0 0 7px 18.500px; }
.b2 { margin-left: 22px; }
.b3 { margin-left: 22.500px; }
.omni { margin: 2px 0 0 17.500px; width: 1490px; height: 43px; border-radius: 22px; background: #202124; display: flex; align-items: center; padding: 0 13px 0 16.500px; }
.url { font-size: 17.500px; line-height: 24px; color: #fff; margin-left: 14.500px; }
.url em { color: #8b8e92; }
.omni-icons { margin-left: auto; display: flex; }
.ext { margin-top: -1px; }
.avatar { width: 27px; height: 27px; border-radius: 50%; background: #c2185b; color: #fff; font-size: 15px; line-height: 27px; text-align: center; margin-left: 17px; font-family: Roboto, sans-serif; flex: none; }
.dots { margin-left: 24px; }

.head { height: 81px; border-bottom: 1px solid #d5d8dc; display: flex; background: #f1f3f5; }
.logo { margin: 18px 0 0 20px; }
.titles { margin-left: 25px; flex: 1; }
.title { height: 28px; margin-top: 13.700px; font-size: 21.500px; line-height: 28px; display: flex; }
.menu { height: 26px; margin-top: 8.300px; display: flex; font-size: 17px; line-height: 26px; }
.status { font-size: 14.500px; color: #717375; line-height: 27px; }
.share { width: 107px; height: 40px; margin: 33px 0 0; border-radius: 4px; background: #f2931e; border: 1px solid #ee8c14; display: flex; align-items: center; gap: 5px; padding-left: 14px; font: 18.500px "Liberation Sans", sans-serif; }
.share span { padding-top: 1px; }
.sun { margin: 7px 12px 0 8px; }

.toolbar { height: 48px; border-top: 1px solid #fff; border-bottom: 1px solid #d0d3d6; display: flex; align-items: center; background: #f1f3f5; padding-bottom: 1.500px; }
.zoom { font-size: 17.500px; line-height: 24px; margin: 4.500px 0 0 17.500px; }
.tright { margin-left: auto; margin-right: 21px; display: flex; align-items: center; }

.work { height: 805px; display: flex; }
.side { width: 266px; border-right: 1px solid #d5d8dc; display: flex; flex-direction: column; }
.list { height: 740px; border-bottom: 1px solid #d8dbde; display: flex; }
.sections { width: 253px; }
.open { height: 35px; border-bottom: 1px solid #dfe1e4; display: flex; padding: 0 0 0 7px; font-size: 15.500px; -webkit-text-stroke: .35px #000; }
.open svg { margin: 9px 7.500px 0 0; }
.open span { line-height: 29px; }
.palette { display: grid; grid-template-columns: repeat(5, 45px); grid-auto-rows: 42.450px; padding: 8.500px 0 8px 13.200px; height: 398.700px; border-bottom: 1px solid #dfe1e4; overflow: hidden; }
.palette svg { width: 45px; height: 42.450px; }
.sec { height: 43.660px; border-bottom: 1px solid #dfe1e4; display: flex; padding-left: 9.500px; font-size: 15.500px; -webkit-text-stroke: .35px #000; }
.sec:last-child { border: 0; }
.sec svg { margin: 14.500px 9.500px 0 0; }
.sec span { line-height: 45.500px; }
.vbar { width: 6px; height: 578px; margin: 160px 0 0 3px; border-radius: 3px; background: #d9dadc; }
.more { flex: 1; }
.morebtn { margin: 14px 0 0 62px; width: 141px; height: 37px; border: 1px solid #3079ed; border-radius: 4px; background: linear-gradient(#4d90fe, #4787ed); color: #fff; display: flex; align-items: center; justify-content: center; font: 18px "Liberation Sans", sans-serif; }

.center { width: 1353px; display: flex; flex-direction: column; }
.canvas { background: #fbfbfb; }
.dt { font: 6.750px "Liberation Sans", sans-serif; text-anchor: middle; fill: #333; text-rendering: geometricPrecision; }
.dt.u { text-decoration: underline; }
.pages { height: 46px; border-top: 1px solid #d5d8dc; display: flex; align-items: center; background: #f1f3f5; }
.pd { margin-left: 16.500px; }
.page { margin-left: 16px; width: 90px; height: 45px; background: #fff; border: solid #dadce0; border-width: 0 1px; padding-left: 14.500px; display: flex; align-items: center; font-size: 15px; color: #555; }
.page svg { margin-left: 9px; }
.pp { margin-left: 10.500px; }

.panel { width: 301px; border-left: 1px solid #d5d8dc; display: flex; flex-direction: column; color: #616366; font-size: 15px; }
.ptabs { height: 42px; display: flex; font-weight: 700; font-size: 15.500px; }
.pt { display: flex; justify-content: center; line-height: 46px; }
.pt.on { width: 133px; }
.pt.off { width: 134px; background: #e3e3e3; border: solid #d5d8e0; border-width: 0 1px 1px 0; line-height: 45px; }
.pt.x { flex: 1; background: #e3e3e3; border: solid #d5d8e0; border-width: 0 1px 1px 1px; }
.pt.x svg { margin-top: 13px; }
.box { border-bottom: 1px solid #d6d9df; padding-left: 18px; }
h4 { margin: 0; font-size: 15px; line-height: 24px; height: 24px; font-weight: 700; display: flex; }
.view { height: 208px; padding-top: 17px; }
.view h4 { margin-bottom: 9px; }
.row { display: flex; align-items: center; }
.r28 { height: 28px; }
.r30 { height: 30px; }
.r32 { height: 32px; }
.ck { width: 15px; height: 15px; border: 1.400px solid #767676; border-radius: 3px; background: #fff; margin-right: 8.500px; flex: none; position: relative; top: -.5px; }
.ck.none { visibility: hidden; }
.ck.on { border: 0; background: #0075ff; }
.ck.on:after { content: ""; position: absolute; left: 5px; top: 1.500px; width: 3.500px; height: 7px; border: solid #fff; border-width: 0 2.200px 2.200px 0; transform: rotate(42deg); }
.lb { line-height: 22px; }
.lb.low { padding-top: 2px; }
.opts .lb { margin-top: -1px; }
.num { width: 60px; height: 26px; border: 1px solid #d9dbde; border-radius: 5px; background: #fff; color: #000; display: flex; align-items: center; justify-content: flex-end; padding-right: 3px; font: 15.500px "Liberation Sans", sans-serif; margin-left: 52.300px; }
.spin { width: 15px; height: 25px; display: flex; flex-direction: column; border: 1px solid #dcdcdc; border-radius: 4px; background: #efefef; }
.spin b { flex: 1; display: flex; align-items: center; justify-content: center; }
.spin b + b { border-top: 1px solid #dcdcdc; }
.color { margin-left: 5px; width: 56px; height: 28px; border: 1px solid #d8d8d8; border-radius: 5px; background: #efefef; display: flex; align-items: center; gap: 4px; padding-left: 3px; }
.color u { width: 29px; height: 17px; border: 1px solid #000; background: #cfcfcf; }
.chg { margin: 0 20px 0 auto; width: 138px; height: 27px; border: 1px solid #d8d8d8; border-radius: 5px; background: #efefef; color: #000; display: flex; align-items: center; justify-content: center; font: 15.500px "Liberation Sans", sans-serif; }
.second { margin-left: 60.500px; }
.opts { height: 173px; padding-top: 13px; }
.opts h4 { margin-bottom: 5.500px; }
.size { height: 120px; padding-top: 13px; }
.select { margin-top: 6px; width: 257px; height: 26px; border: 1px solid #d8d8d8; border-radius: 5px; background: #efefef; color: #000; display: flex; align-items: center; justify-content: space-between; padding: 0 5px 0 7px; font: 15.500px "Liberation Sans", sans-serif; }
.radios { display: flex; margin-top: 13px; padding-left: 11px; height: 24px; }
.radios span { line-height: 22px; }
.rd { width: 15px; height: 15px; border-radius: 50%; border: 1.400px solid #767676; background: #fff; margin: 1px 8.500px 0 0; }
.rd.on { margin-left: 12.500px; border-color: #0075ff; background: radial-gradient(#0075ff 4.500px, #fff 5px); }
.btns { height: 79px; padding-top: 15px; }
.btn { width: 262px; height: 24px; margin-bottom: 2px; border: 1px solid #d8d8d8; border-radius: 5px; background: #efefef; color: #000; display: flex; align-items: center; justify-content: center; font: 15.500px "Liberation Sans", sans-serif; }
.btn + .btn span { padding-top: 1px; }

.task { height: 50px; background: #19232b; display: flex; color: #fff; }
.start { width: 60px; display: flex; align-items: center; justify-content: center; }
.search { width: 360px; height: 50px; background: #f2f2f2; border: solid #c4c4c4; border-width: 1px 0; display: flex; align-items: center; padding-left: 15px; color: #303030; font-size: 18px; }
.search > span { margin-left: 13px; }
.art { margin-left: auto; align-self: flex-end; }
.apps { display: flex; }
.app { width: 62.200px; height: 50px; display: flex; align-items: center; justify-content: center; position: relative; }
.app:after { content: ""; position: absolute; bottom: 0; left: 5.500px; right: 5.500px; height: 3px; background: transparent; }
.app.run:after { background: #76b9ed; }
.app.on { background: #47525a; }
.app.on:after { left: 0; right: 0; }
.tray { margin-left: auto; display: flex; align-items: center; width: 555px; font-size: 17.500px; }
.deg { margin-left: 10px; line-height: 26px; }
.wt { margin-left: 12px; }
.t1 { margin-left: 31px; }
.t2 { margin-left: 12px; }
.t3 { margin-left: 9.500px; }
.t4 { margin-left: 12px; }
.hun { margin-left: 12px; font-size: 15px; }
.clock { width: 82px; margin-left: 15px; display: flex; flex-direction: column; align-items: center; font-size: 15px; line-height: 22.700px; }
.note { margin-left: 22px; }
.edge { margin-left: auto; margin-right: 5px; width: 1px; height: 50px; background: #4a545b; }

.mark { position: absolute; left: 1492.500px; top: 923px; color: rgba(140, 142, 144, .55); }
.m1 { font-size: 23.500px; line-height: 34px; display: flex; }
.m2 { font-size: 17.500px; line-height: 26px; display: flex; margin-top: -.5px; }
</style>
